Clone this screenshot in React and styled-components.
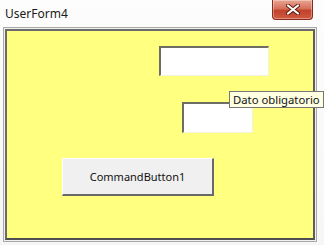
import React from 'react';
import styled, { createGlobalStyle } from 'styled-components';

const Global = createGlobalStyle`
  html, body { margin: 0; padding: 0; background: #fbfbfb; }
  body { font-family: "Noto Sans", "Open Sans", sans-serif; }
`;

const Window = styled.div`
  width: 324px;
  height: 245px;
  background: linear-gradient(180deg, #fdfdfd 0%, #f6f6f6 100%);
  display: flex;
  flex-direction: column;
  overflow: hidden;
`;

const TitleBar = styled.div`
  height: 27px;
  display: flex;
  align-items: flex-start;
  justify-content: space-between;
  padding: 0 11px 0 5px;
`;

const Title = styled.span`
  margin-top: 5px;
  font-size: 12px;
  color: #1a1a1a;
`;

const CloseButton = styled.div`
  width: 41px;
  height: 20px;
  box-sizing: border-box;
  border: 1px solid #8a2a1c;
  border-top: none;
  border-radius: 0 0 4px 4px;
  background: linear-gradient(180deg, #e8a593 0%, #d6705a 45%, #c2422a 55%, #cf5a40 100%);
  display: flex;
  align-items: center;
  justify-content: center;
  box-shadow: inset 0 0 0 1px rgba(255, 255, 255, 0.35);
`;

const Frame = styled.div`
  margin: 0 7px 0 3px;
  height: 215px;
  box-sizing: border-box;
  border: 1px solid #a9a9a9;
  padding: 1px;
  background: #f0f0f0;
  display: flex;
`;

const Canvas = styled.div`
  position: relative;
  flex: 1;
  box-sizing: border-box;
  border-top: 2px solid #6b6b6b;
  border-left: 2px solid #6b6b6b;
  border-right: 2px solid #5e5e5e;
  border-bottom: 2px solid #4e4e4e;
  background: #ffff80;
  display: flex;
  flex-direction: column;
  align-items: flex-start;
`;

const TextBox = styled.div`
  margin-left: ${p => p.left}px;
  margin-top: ${p => p.top}px;
  width: ${p => p.w}px;
  height: ${p => p.h}px;
  box-sizing: border-box;
  background: #ffffff;
  border-top: 2px solid #6e6e62;
  border-left: 2px solid #6e6e62;
  border-right: 1px solid #f2f2d8;
  border-bottom: 1px solid #f2f2d8;
`;

const Button = styled.div`
  margin-left: 55px;
  margin-top: 25px;
  width: 152px;
  height: 38px;
  box-sizing: border-box;
  background: #f0f0f0;
  border-top: 1px solid #ffffff;
  border-left: 1px solid #ffffff;
  border-right: 2px solid #696969;
  border-bottom: 2px solid #696969;
  display: flex;
  align-items: center;
  justify-content: center;
  font-size: 11px;
  color: #111;
`;

const Tooltip = styled.div`
  position: absolute;
  left: 222px;
  top: 60px;
  height: 17px;
  box-sizing: border-box;
  padding: 0 3px;
  background: #ffffe1;
  border: 1px solid #767676;
  font-size: 11.3px;
  line-height: 15px;
  color: #111;
  white-space: nowrap;
`;

export default function App() {
  return (
    <Window>
      <Global />
      <TitleBar>
        <Title>UserForm4</Title>
        <CloseButton>
          <svg width="14" height="11" viewBox="0 0 14 11">
            <path d="M2 1.5 L12 9.5 M12 1.5 L2 9.5" stroke="#5a1a10" strokeWidth="4" strokeLinecap="round" />
            <path d="M2 1.5 L12 9.5 M12 1.5 L2 9.5" stroke="#ffffff" strokeWidth="2.2" strokeLinecap="round" />
          </svg>
        </CloseButton>
      </TitleBar>
      <Frame>
        <Canvas>
          <TextBox left={152} top={15} w={110} h={30} />
          <TextBox left={175} top={26} w={71} h={31} />
          <Button>CommandButton1</Button>
          <Tooltip>Dato obligatorio</Tooltip>
        </Canvas>
      </Frame>
    </Window>
  );
}
